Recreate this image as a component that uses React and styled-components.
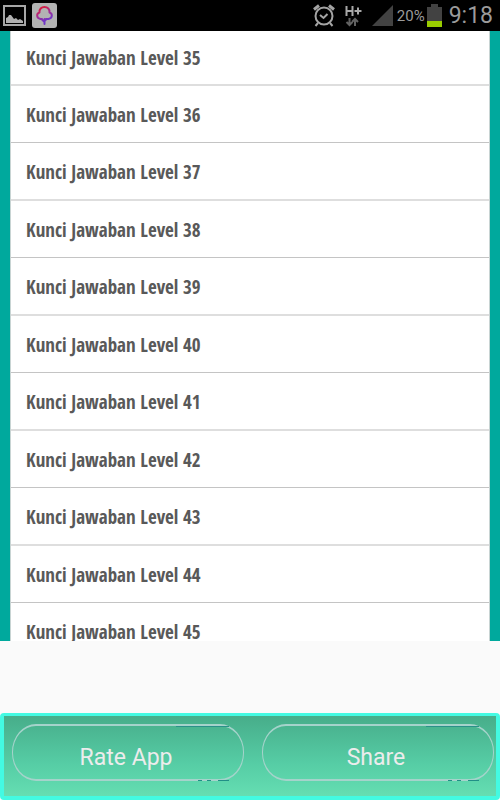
import React from "react";
import styled, { createGlobalStyle } from "styled-components";

const GlobalStyle = createGlobalStyle`
  * { box-sizing: border-box; }
  body { margin: 0; background: #fafafa; }
`;

const Screen = styled.div`
  height: 100vh;
  display: flex;
  flex-direction: column;
  background: #fafafa;
  overflow: hidden;
`;

const StatusBar = styled.header`
  flex: none;
  height: 31px;
  display: flex;
  align-items: center;
  justify-content: space-between;
  padding: 0 7px 0 2px;
  background: #000;
  color: #9b9b9b;
  font-family: Roboto, sans-serif;
`;

const StatusGroup = styled.div`
  display: flex;
  align-items: center;
  gap: ${(p) => p.$gap}px;
`;

const Percent = styled.span`
  font-size: 15px;
  line-height: 20px;
`;

const Battery = styled.div`
  display: flex;
  align-items: center;
  gap: 2px;
`;

const Clock = styled.time`
  font-size: 23px;
  line-height: 30px;
  margin-left: 3px;
`;

const Panel = styled.main`
  flex: 1;
  min-height: 0;
  overflow: hidden;
  padding: 0 10px;
  background: #00a99d;
`;

const LevelList = styled.ul`
  margin: 0;
  padding: 0;
  list-style: none;
  background: #fff;
  border: 1px solid #c8d4d3;
  border-width: 0 1px;
`;

const LevelRow = styled.li`
  height: 57px;
  display: flex;
  padding-top: 2px;
  border-bottom: 1px solid #c4c4c4;
  &:nth-child(odd) {
    height: 58px;
    border-bottom: 2px solid #dedede;
  }
  &:first-child {
    height: 55px;
    padding-top: 0;
  }
`;

const LevelLink = styled.a`
  flex: 1;
  display: flex;
  align-items: center;
  padding: 0 15px;
  color: #595959;
  font: bold 19px/24px "Open Sans Condensed", "Roboto Condensed", Roboto, sans-serif;
  text-decoration: none;
`;

const Footer = styled.footer`
  flex: none;
  margin-top: 72px;
  display: grid;
  grid-template-columns: 1fr 1fr;
  gap: 18px;
  padding: 8px 2px 15px 8px;
  border: 4px solid #43fae2;
  border-top-width: 3px;
  border-radius: 4px;
  background: linear-gradient(#47ad8a, #56cda5 60%, #65deb2) padding-box, #43fae2;
`;

const ActionButton = styled.button`
  position: relative;
  padding: 11px 4px 0 0;
  height: 57px;
  border: 1px solid #a5d3cb;
  border-width: 2px 1px;
  border-radius: 24px / 28px;
  background: transparent;
  color: #ececec;
  font: 23px/28px Roboto, sans-serif;
  text-align: center;
`;

const EdgeMark = styled.span`
  position: absolute;
  right: 14px;
  height: 1px;
  width: ${(p) => (p.$bottom ? 31 : 53)}px;
  ${(p) => (p.$bottom
    ? "bottom: -2px; background: linear-gradient(90deg, #218f87 4px, transparent 4px 9px, #218f87 9px 13px, transparent 13px 20px, #218f87 20px);"
    : "top: 0; background: #2b9189;")}
`;

const levels = Array.from({ length: 11 }, (_, i) => 35 + i);

function PictureIcon() {
  return (
    <svg width="24" height="23" viewBox="0 0 24 23" aria-hidden="true">
      <path d="M2 2h21v19H2z" fill="none" stroke="#a6a6a6" strokeWidth="2" />
      <path d="M4 19v-5l2-1 1-2h2l3 4 2-1 2 2 2-1 3 2v2z" fill="#b0b0b0" />
    </svg>
  );
}

function TreeIcon() {
  return (
    <svg width="25" height="25" viewBox="0 0 25 25" aria-hidden="true">
      <defs>
        <linearGradient id="tree" x1="0" y1="0" x2="0.4" y2="1">
          <stop offset="0.15" stopColor="#d51d43" />
          <stop offset="0.5" stopColor="#a52a91" />
          <stop offset="0.9" stopColor="#7137c8" />
        </linearGradient>
      </defs>
      <rect width="25" height="25" rx="3" fill="#b3b3b3" />
      <path
        d="M10 16H8.500c-4.500-1-4-5.500-1-6.500C7 6 9.500 4 12.500 4s5.500 2 5 5.500c3 1 3.500 5.500-1 6.500H14M12.500 21v-5M12.500 19l-3-3M12.500 18l2-2"
        fill="none" stroke="url(#tree)" strokeWidth="2" strokeLinecap="round" strokeLinejoin="round"
      />
    </svg>
  );
}

function AlarmIcon() {
  return (
    <svg width="22" height="23" viewBox="0 0 22 23" fill="none" stroke="#a4a4a4" strokeWidth="2" aria-hidden="true">
      <circle cx="11" cy="12" r="8.500" />
      <path d="M7 11l3.500 3 4-4M5 19l-2.500 3M17 19l2.500 3" />
      <path d="M1 5.500l5-4M21 5.500l-5-4" strokeWidth="3" />
    </svg>
  );
}

function DataIcon() {
  return (
    <svg width="17" height="22" viewBox="0 0 17 22" fill="none" aria-hidden="true">
      <path d="M1.500 1v10M7.500 1v10M1.500 6h6M9.500 6h7M13 2.500v7" stroke="#a8a8a8" strokeWidth="2" />
      <path d="M4.500 13v7M1.500 17l3 3 3-3M10 21v-7M7 17l3-3 3 3" stroke="#626262" strokeWidth="2" />
    </svg>
  );
}

function SignalIcon() {
  return (
    <svg width="21" height="21" viewBox="0 0 21 21" aria-hidden="true">
      <path d="M21 0v21H0z" fill="#424242" />
    </svg>
  );
}

function BatteryIcon() {
  return (
    <svg width="15" height="23" viewBox="0 0 15 23" aria-hidden="true">
      <path d="M4 0h7v3h4v14H0V3h4z" fill="#424242" />
      <path d="M0 17h15v6H0z" fill="#99cc00" />
    </svg>
  );
}

export default function App() {
  return (
    <Screen>
      <GlobalStyle />
      <StatusBar>
        <StatusGroup $gap={6}>
          <PictureIcon />
          <TreeIcon />
        </StatusGroup>
        <StatusGroup $gap={4}>
          <StatusGroup $gap={10}>
            <AlarmIcon />
            <DataIcon />
            <SignalIcon />
          </StatusGroup>
          <Battery>
            <Percent>20%</Percent>
            <BatteryIcon />
          </Battery>
          <Clock>9:18</Clock>
        </StatusGroup>
      </StatusBar>
      <Panel>
        <LevelList>
          {levels.map((n) => (
            <LevelRow key={n}>
              <LevelLink href={`#level-${n}`}>Kunci Jawaban Level {n}</LevelLink>
            </LevelRow>
          ))}
        </LevelList>
      </Panel>
      <Footer>
        {["Rate App", "Share"].map((label) => (
          <ActionButton key={label} type="button">
            {label}
            <EdgeMark />
            <EdgeMark $bottom />
          </ActionButton>
        ))}
      </Footer>
    </Screen>
  );
}
